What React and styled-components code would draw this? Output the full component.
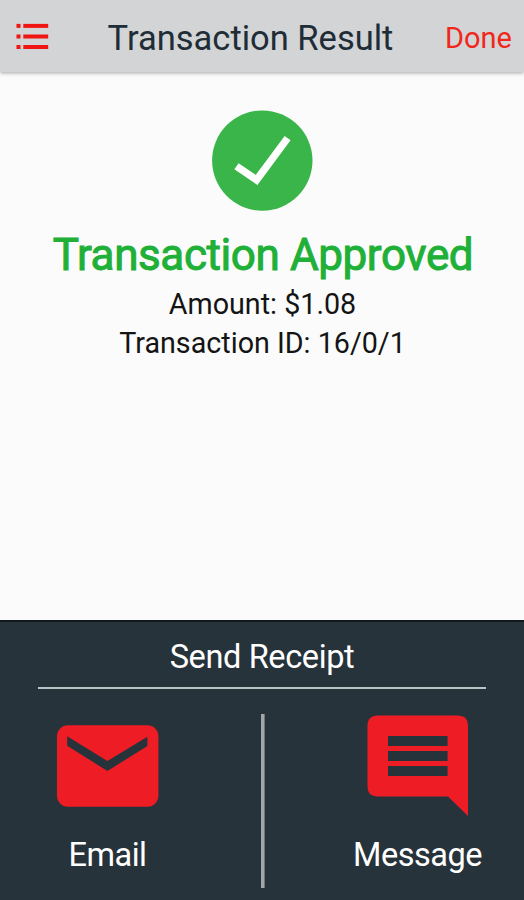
import React from 'react';
import styled, { createGlobalStyle } from 'styled-components';

const GlobalStyle = createGlobalStyle`
  * {
    box-sizing: border-box;
  }

  body {
    margin: 0;
    background: #fbfbfb;
    font-family: Roboto, sans-serif;
  }
`

const MenuIcon = () => (
  <svg width="33" height="27" viewBox="0 0 33 27" fill="#f01512">
    {[0.9, 11.5, 22].map((y) => (
      <g key={y}>
        <rect x="0.5" y={y} width="4" height="4" />
        <rect x="7.3" y={y} width="24.9" height="4" />
      </g>
    ))}
  </svg>
);

const ApprovedIcon = () => (
  <svg width="102" height="102" viewBox="0 0 102 102">
    <circle cx="51.3" cy="50.6" r="50.2" fill="#3ab54a" />
    <path d="M25.5 56.2 L45.6 70 L76.6 28.1" fill="none" stroke="#fff" strokeWidth="7.4" />
  </svg>
);

const EmailIcon = () => (
  <svg width="102" height="82" viewBox="0 0 102 82">
    <rect x="0" y="0.3" width="101.4" height="81.5" rx="11" fill="#ee1c25" />
    <path d="M10.2 11.3 L50.4 36 L90.4 11.8 V21 L50.4 46 L10.2 20.7 Z" fill="#27333b" />
  </svg>
);

const MessageIcon = () => (
  <svg width="102" height="101" viewBox="0 0 102 101">
    <path d="M11 0.5 H91 Q101 0.5 101 10.5 V101 L81 81.5 H11 Q0.5 81.5 0.5 71 V11 Q0.5 0.5 11 0.5 Z" fill="#ee1c25" />
    {[21, 36, 51].map((y) => (
      <rect key={y} x="21" y={y} width="59.6" height="10" fill="#27333b" />
    ))}
  </svg>
);

const App = () => {
  return (
    <Screen>
      <GlobalStyle />
      <Header>
        <IconButton aria-label="Menu"><MenuIcon /></IconButton>
        <Title>Transaction Result</Title>
        <DoneButton>Done</DoneButton>
      </Header>
      <Result>
        <ApprovedIcon />
        <Status>Transaction Approved</Status>
        <Detail>Amount: $1.08</Detail>
        <Detail>Transaction ID: 16/0/1</Detail>
      </Result>
      <Receipt>
        <ReceiptTitle>Send Receipt</ReceiptTitle>
        <Options>
          <Option>
            <IconSlot><EmailIcon /></IconSlot>
            Email
          </Option>
          <Divider />
          <Option $right>
            <IconSlot><MessageIcon /></IconSlot>
            Message
          </Option>
        </Options>
      </Receipt>
    </Screen>
  )
};

const Screen = styled.div`
  display: flex;
  flex-direction: column;
  height: 900px;
  overflow: hidden;
`

const Header = styled.header`
  display: grid;
  grid-template-columns: 92px 1fr 92px;
  align-items: center;
  height: 72px;
  padding-top: 3px;
  background: #d2d4d5;
  box-shadow: 0 1px 4px rgba(0, 0, 0, 0.35);
`

const Button = styled.button`
  margin: 0;
  padding: 0;
  border: 0;
  background: none;
  font-family: inherit;
  cursor: pointer;
`

const IconButton = styled(Button)`
  display: flex;
  padding: 0 0 3px 16px;
`

const Title = styled.h1`
  margin: 0 23px 0 0;
  padding-top: 1px;
  color: #202c36;
  font-size: 34.5px;
  font-weight: 400;
  line-height: 40px;
  text-align: center;
  white-space: nowrap;
`

const DoneButton = styled(Button)`
  padding-right: 12px;
  color: #f0281c;
  font-size: 29px;
  line-height: 36px;
  text-align: right;
`

const Result = styled.main`
  display: flex;
  flex: 1;
  flex-direction: column;
  align-items: center;
  padding-top: 38px;
`

const Status = styled.h2`
  margin: 14px 0 0;
  padding-left: 2px;
  color: #20b038;
  font-size: 44px;
  font-weight: 400;
  letter-spacing: -0.4px;
  line-height: 59px;
  -webkit-text-stroke: 1px #20b038;
`

const Detail = styled.p`
  margin: 0;
  padding-left: 1px;
  color: #141414;
  font-size: 28.7px;
  line-height: 39px;
`

const Receipt = styled.section`
  display: flex;
  flex-direction: column;
  height: 280px;
  padding: 0 38px;
  border-top: 2px solid #10191d;
  background: #27333b;
  color: #fff;
`

const ReceiptTitle = styled.h3`
  margin: 0;
  height: 67px;
  padding-top: 3px;
  border-bottom: 2px solid #bac3c6;
  font-size: 32.5px;
  font-weight: 400;
  letter-spacing: -0.38px;
  line-height: 64px;
  text-align: center;
`

const Options = styled.div`
  display: flex;
  justify-content: space-between;
  padding-top: 25px;
`

const Option = styled(Button)`
  display: flex;
  flex-direction: column;
  align-items: center;
  width: 139px;
  height: 174px;
  margin-right: ${(props) => (props.$right ? '-1px' : '0')};
  color: #fff;
  font-size: 32.5px;
  letter-spacing: -0.48px;
  line-height: 41px;
`

const IconSlot = styled.span`
  display: flex;
  align-items: center;
  height: 103px;
  margin-bottom: 18px;
`

const Divider = styled.div`
  width: 4px;
  height: 174px;
  border-right: 1px solid #6f787d;
  background: #a3a7a9;
`

export default App;
